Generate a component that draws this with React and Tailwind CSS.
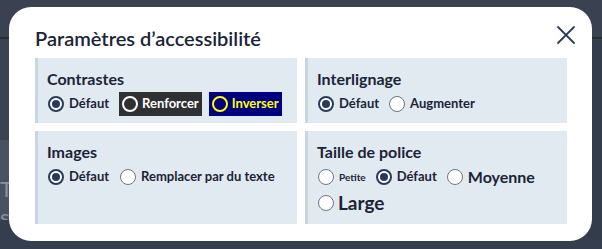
import React from "react";

const font = { fontFamily: "Lato, 'Noto Sans', sans-serif" };

function Radio({ checked, variant = "default" }) {
  if (variant === "dark") {
    return <span className="inline-block w-[16px] h-[16px] rounded-full border-2 border-white bg-transparent shrink-0" />;
  }
  if (variant === "yellow") {
    return <span className="inline-block w-[16px] h-[16px] rounded-full border-2 border-[#ffff00] bg-transparent shrink-0" />;
  }
  if (checked) {
    return (
      <span className="inline-flex items-center justify-center w-[16px] h-[16px] rounded-full border-2 border-[#2b3a5c] bg-white shrink-0">
        <span className="w-[8px] h-[8px] rounded-full bg-[#2b3a5c]" />
      </span>
    );
  }
  return <span className="inline-block w-[16px] h-[16px] rounded-full border-[1.5px] border-[#6e7584] bg-white shrink-0" />;
}

function Panel({ title, className, children }) {
  return (
    <div className={"bg-[#e1e9f1] border-l-[3px] border-[#c8d5e3] pl-[9px] pt-[12px] " + className}>
      <div className="text-[16px] font-bold text-[#1b2337] leading-[18px]">{title}</div>
      {children}
    </div>
  );
}

export default function App() {
  return (
    <div className="relative w-[602px] h-[249px] overflow-hidden bg-[#394354]" style={font}>
      {/* underlying page hint */}
      <div className="absolute left-0 top-0 w-full h-[37px] bg-[#3a4252]" />
      <div className="absolute left-0 top-[37px] w-full h-[2px] bg-[#25302a]" />
      <div className="absolute left-0 top-[140px] w-[20px] h-[80px] bg-[#4a5262]" />
      <div className="absolute left-0 top-[178px] text-[22px] text-[#8a909c] leading-none">T</div>
      <div className="absolute left-0 top-[206px] text-[22px] text-[#8a909c] leading-none">s</div>
      <div className="absolute left-0 top-[220px] w-full h-[29px] bg-[#353e4e]" />
      <div className="absolute right-0 top-[40px] w-[14px] h-[200px] bg-[#333c4b]" />

      <div className="relative ml-[9px] mt-[7px] w-[583px] h-[234px] bg-white rounded-[22px] pl-[26px] pr-[25px] pt-[16px]">
        <div className="flex items-start justify-between">
          <h1 className="text-[20px] font-semibold text-[#1b2337] leading-[26px] pt-[2px]">Paramètres d’accessibilité</h1>
          <button className="mt-[1px] mr-[-10px] text-[#2b3a5c]">
            <svg width="22" height="22" viewBox="0 0 22 22" fill="none" stroke="currentColor" strokeWidth="1.8" strokeLinecap="round">
              <path d="M3 3 L19 19 M19 3 L3 19" />
            </svg>
          </button>
        </div>

        <div className="grid grid-cols-[262px_262px] gap-[8px] mt-[7px]">
          <Panel title="Contrastes" className="h-[65px]">
            <div className="flex items-center mt-[4px] text-[13px] font-bold">
              <label className="flex items-center gap-[5px] text-[#1b2337] ml-[1px]">
                <Radio checked /> Défaut
              </label>
              <label className="flex items-center gap-[4px] ml-[10px] bg-[#2f3034] text-white h-[24px] pl-[3px] pr-[3px]">
                <Radio variant="dark" /> Renforcer
              </label>
              <label className="flex items-center gap-[4px] ml-[7px] bg-[#000080] text-[#ffff00] h-[24px] pl-[3px] pr-[3px]">
                <Radio variant="yellow" /> Inverser
              </label>
            </div>
          </Panel>
          <Panel title="Interlignage" className="h-[65px]">
            <div className="flex items-center h-[24px] mt-[4px] text-[13px] font-bold text-[#1b2337]">
              <label className="flex items-center gap-[5px] ml-[1px]">
                <Radio checked /> Défaut
              </label>
              <label className="flex items-center gap-[5px] ml-[10px]">
                <Radio /> Augmenter
              </label>
            </div>
          </Panel>
          <Panel title="Images" className="h-[93px]">
            <div className="flex items-center h-[24px] mt-[4px] text-[13px] font-bold text-[#1b2337]">
              <label className="flex items-center gap-[5px] ml-[1px]">
                <Radio checked /> Défaut
              </label>
              <label className="flex items-center gap-[5px] ml-[11px]">
                <Radio /> Remplacer par du texte
              </label>
            </div>
          </Panel>
          <Panel title="Taille de police" className="h-[93px]">
            <div className="flex items-center h-[24px] mt-[4px] font-bold text-[#1b2337]">
              <label className="flex items-center gap-[5px] ml-[1px] text-[10px]">
                <Radio /> Petite
              </label>
              <label className="flex items-center gap-[5px] ml-[10px] text-[13px]">
                <Radio checked /> Défaut
              </label>
              <label className="flex items-center gap-[5px] ml-[10px] text-[16px]">
                <Radio /> Moyenne
              </label>
            </div>
            <div className="flex items-center h-[28px] font-bold text-[#1b2337]">
              <label className="flex items-center gap-[4px] ml-[1px] text-[19px]">
                <Radio /> Large
              </label>
            </div>
          </Panel>
        </div>
      </div>
    </div>
  );
}
